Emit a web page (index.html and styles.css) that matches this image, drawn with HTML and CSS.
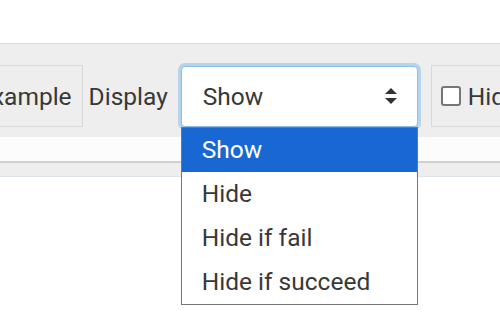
FILE: index.html
```html
<!DOCTYPE html>
<html lang="en">
<head>
    <meta charset="UTF-8">
    <meta name="viewport" content="width=device-width, initial-scale=1.0">
    <title>Display filter</title>
    <link rel="stylesheet" href="styles.css">
</head>
<body>
    <div class="top-space"></div>

    <!-- Toolbar -->
    <div class="toolbar">
        <div class="toolbar-row">
            <div class="tool-btn">Example</div>
            <span class="tool-label">Display</span>
            <div class="select-wrap">
                <div class="select">
                    <span>Show</span>
                    <svg class="select-arrows" width="12" height="16" viewBox="0 0 12 16">
                        <path d="M6 0 L12 6 L0 6 Z" fill="#333"/>
                        <path d="M0 10 L12 10 L6 16 Z" fill="#333"/>
                    </svg>
                </div>
                <!-- Open dropdown list -->
                <ul class="select-list">
                    <li class="selected">Show</li>
                    <li>Hide</li>
                    <li>Hide if fail</li>
                    <li>Hide if succeed</li>
                </ul>
            </div>
            <label class="tool-btn check-btn">
                <span class="checkbox"></span>
                <span>Hide passed</span>
            </label>
        </div>
    </div>

    <div class="strip-light"></div>
    <div class="strip-gray"></div>
</body>
</html>
```

FILE: styles.css
```css
html {
    overflow: hidden;
}

body {
    margin: 0;
    min-height: 318px;
    background: #fff;
    font-family: Roboto, "Liberation Sans", Arial, sans-serif;
    font-size: 24.5px;
    color: #383838;
}

.top-space {
    height: 43px;
}

.toolbar {
    height: 94px;
    box-sizing: border-box;
    padding-top: 21px;
    background-color: #eeeeee;
    border-top: 1px solid #dcdcdc;
}

.toolbar-row {
    display: flex;
    align-items: center;
    margin-left: -37px;
    white-space: nowrap;
}

.tool-btn {
    height: 62px;
    display: flex;
    align-items: center;
    padding: 0 10px 0 14px;
    border: 1px solid #d9d9d9;
    background-color: #eeeeee;
    box-sizing: border-box;
}

.tool-label {
    margin-left: 6px;
    margin-right: 13px;
}

.select-wrap {
    position: relative;
    margin-right: 13px;
}

.select {
    width: 237px;
    height: 61px;
    box-sizing: border-box;
    background: #fff;
    border: 1px solid #8cbde9;
    border-radius: 4px;
    box-shadow: 0 0 0 3px rgba(140, 190, 235, 0.55);
    display: flex;
    align-items: center;
    justify-content: space-between;
    padding: 0 20px 0 21px;
}

.select-arrows {
    display: block;
}

.select-list {
    position: absolute;
    top: 61px;
    left: 0;
    width: 237px;
    box-sizing: border-box;
    margin: 0;
    padding: 0;
    list-style: none;
    background: #fff;
    border: 1px solid #767676;
    z-index: 10;
}

.select-list li {
    height: 44px;
    line-height: 44px;
    padding-left: 20px;
}

.select-list li.selected {
    background-color: #1967d2;
    color: #fff;
}

.check-btn {
    padding-left: 9px;
    padding-right: 10px;
}

.checkbox {
    width: 16px;
    height: 16px;
    border: 2px solid #767676;
    border-radius: 3px;
    background: #fff;
    margin-right: 7px;
}

.strip-light {
    height: 24px;
    background-color: #fcfcfc;
    border-bottom: 2px solid #cfcfcf;
}

.strip-gray {
    height: 13px;
    background-color: #eeeeee;
    border-bottom: 1px solid #dde3ea;
}
```
